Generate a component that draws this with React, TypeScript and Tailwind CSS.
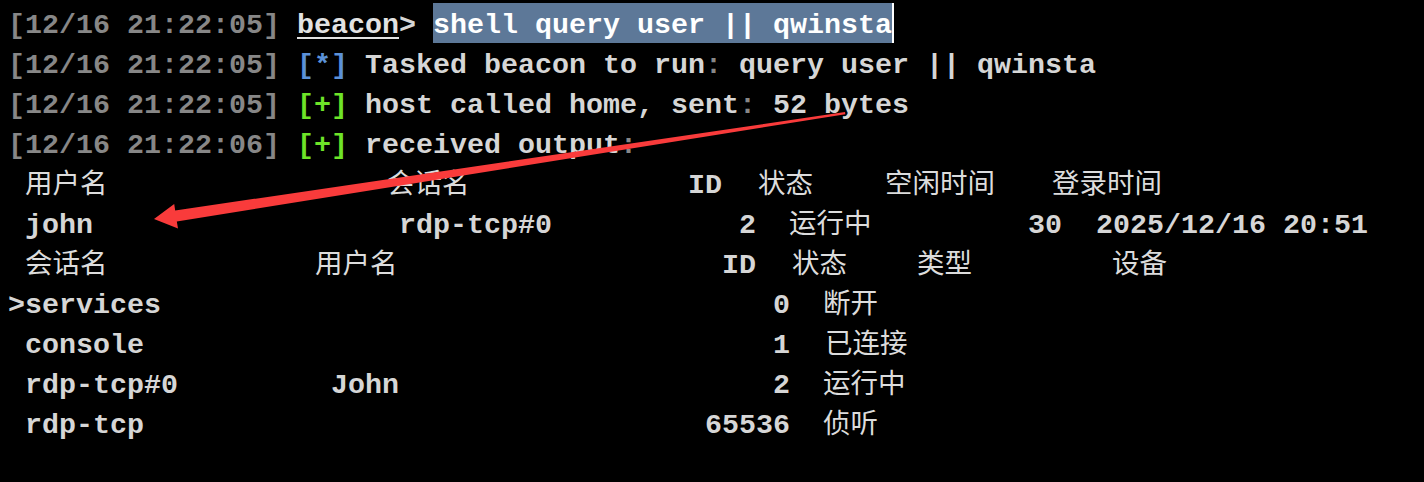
import React from "react";

const TS = "text-[#878787]";
const TX = "text-[#d6d6d6]";

type Seg = { t: string; x: number; cjk?: boolean };

function TableRow({ segs }: { segs: Seg[] }) {
  return (
    <div className="h-[40px] whitespace-pre">
      {segs.map((s, i) => (
        <React.Fragment key={i}>
          {i === 0 ? <span style={{ width: s.x }} className="inline-block" /> : null}
          <span
            style={{ width: i < segs.length - 1 ? segs[i + 1].x - s.x : undefined }}
            className={
              "inline-block " +
              (s.cjk
                ? "font-['Noto_Sans_CJK_SC',sans-serif] font-normal text-[27.5px] leading-[30px] text-[#dcdcdc]"
                : "font-bold")
            }
          >
            {s.t}
          </span>
        </React.Fragment>
      ))}
    </div>
  );
}

export default function App() {
  const rows: Seg[][] = [
    [
      { t: "用户名", x: 25, cjk: true },
      { t: "会话名", x: 387, cjk: true },
      { t: "ID", x: 688 },
      { t: "状态", x: 758, cjk: true },
      { t: "空闲时间", x: 885, cjk: true },
      { t: "登录时间", x: 1052, cjk: true },
    ],
    [
      { t: "john", x: 25 },
      { t: "rdp-tcp#0", x: 399 },
      { t: "2", x: 739 },
      { t: "运行中", x: 789, cjk: true },
      { t: "30", x: 1028 },
      { t: "2025/12/16 20:51", x: 1096 },
    ],
    [
      { t: "会话名", x: 25, cjk: true },
      { t: "用户名", x: 315, cjk: true },
      { t: "ID", x: 722 },
      { t: "状态", x: 792, cjk: true },
      { t: "类型", x: 917, cjk: true },
      { t: "设备", x: 1112, cjk: true },
    ],
    [
      { t: ">services", x: 8 },
      { t: "0", x: 773 },
      { t: "断开", x: 823, cjk: true },
    ],
    [
      { t: "console", x: 25 },
      { t: "1", x: 773 },
      { t: "已连接", x: 825, cjk: true },
    ],
    [
      { t: "rdp-tcp#0", x: 25 },
      { t: "John", x: 331 },
      { t: "2", x: 773 },
      { t: "运行中", x: 823, cjk: true },
    ],
    [
      { t: "rdp-tcp", x: 25 },
      { t: "65536", x: 705 },
      { t: "侦听", x: 823, cjk: true },
    ],
  ];

  return (
    <div
      className={
        "relative w-[1424px] h-[482px] overflow-hidden bg-black pt-[3px] font-['Liberation_Mono',monospace] font-bold text-[28.33px] leading-[45px] " +
        TX
      }
    >
      <div className="pl-[8px]">
        <div className="h-[40px] whitespace-pre">
          <span className={TS}>[12/16 21:22:05]</span>
          <span> </span>
          <span className="underline decoration-[2px] underline-offset-[4px] text-[#e2e2e2]">beacon</span>
          <span>&gt; </span>
          <span className="inline-block h-[40px] align-top bg-[#5d7898] text-white">shell query user || qwinsta</span>
          <span className="inline-block h-[40px] w-[2px] align-top bg-white" />
        </div>
        <div className="h-[40px] whitespace-pre">
          <span className={TS}>[12/16 21:22:05]</span>
          <span> </span>
          <span className="text-[#5b91d8]">[*]</span>
          <span> Tasked beacon to run</span>
          <span className={TS}>:</span>
          <span> query user || qwinsta</span>
        </div>
        <div className="h-[40px] whitespace-pre">
          <span className={TS}>[12/16 21:22:05]</span>
          <span> </span>
          <span className="text-[#6ee428]">[+]</span>
          <span> host called home, sent</span>
          <span className={TS}>:</span>
          <span> 52 bytes</span>
        </div>
        <div className="h-[40px] whitespace-pre">
          <span className={TS}>[12/16 21:22:06]</span>
          <span> </span>
          <span className="text-[#6ee428]">[+]</span>
          <span> received output</span>
          <span className={TS}>:</span>
        </div>
      </div>
      {rows.map((r, i) => (
        <TableRow key={i} segs={r} />
      ))}

      <svg
        className="pointer-events-none absolute left-0 top-0"
        width={1424}
        height={482}
        viewBox="0 0 1424 482"
      >
        <polygon
          fill="#f93b3b"
          points="845,112 845.3,114.2 176.8,221.5 178,228.5 154,219 174.2,204.1 175.2,210.5"
        />
      </svg>
    </div>
  );
}
